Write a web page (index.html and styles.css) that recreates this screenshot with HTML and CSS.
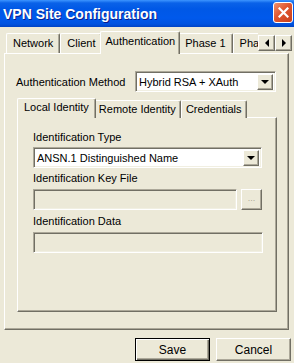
FILE: index.html
```html
<!DOCTYPE html>
<html lang="en">
<head>
  <meta charset="UTF-8">
  <title>VPN Site Configuration</title>
  <link rel="stylesheet" href="styles.css">
</head>
<body>
  <div class="window">
    <div class="titlebar">
      <span class="title">VPN Site Configuration</span>
      <button class="close-btn" title="Close">
        <svg width="11" height="11" viewBox="0 0 11 11">
          <path d="M1.5 1.5 L9.5 9.5 M9.5 1.5 L1.5 9.5" stroke="#fff" stroke-width="2.2" stroke-linecap="square"/>
        </svg>
      </button>
    </div>

    <div class="dialog-body">
      <div class="tab-strip">
        <div class="tabs">
          <div class="tab">Network</div>
          <div class="tab">Client</div>
          <div class="tab active">Authentication</div>
          <div class="tab">Phase 1</div>
          <div class="tab">Phase 2</div>
        </div>
        <div class="tab-scroll">
          <span class="scroll-btn"><i class="arrow-left"></i></span>
          <span class="scroll-btn"><i class="arrow-right"></i></span>
        </div>
      </div>

      <div class="tab-panel outer-panel">
        <div class="method-row">
          <label class="method-label">Authentication Method</label>
          <div class="select method-select">
            <span>Hybrid RSA + XAuth</span>
            <span class="drop-btn"><i class="arrow-down"></i></span>
          </div>
        </div>

        <div class="tab-strip inner-strip">
          <div class="tabs">
            <div class="tab active">Local Identity</div>
            <div class="tab">Remote Identity</div>
            <div class="tab">Credentials</div>
          </div>
        </div>

        <div class="tab-panel inner-panel">
          <label class="field-label first">Identification Type</label>
          <div class="select">
            <span>ANSN.1 Distinguished Name</span>
            <span class="drop-btn"><i class="arrow-down"></i></span>
          </div>

          <label class="field-label">Identification Key File</label>
          <div class="file-row">
            <div class="input disabled"></div>
            <span class="browse-btn">...</span>
          </div>

          <label class="field-label">Identification Data</label>
          <div class="input disabled"></div>
        </div>
      </div>

      <div class="actions">
        <button class="btn default">Save</button>
        <button class="btn">Cancel</button>
      </div>
    </div>
  </div>
</body>
</html>
```

FILE: styles.css
```css
:root {
  --face: #ece9d8;
  --light: #ffffff;
  --shadow: #aca899;
  --dark-shadow: #716f64;
  --text: #000000;
}

* {
  margin: 0;
  padding: 0;
  box-sizing: border-box;
}

body {
  width: 294px;
  height: 363px;
  overflow: hidden;
  background-color: var(--face);
  font-family: 'Liberation Sans', Arial, sans-serif;
  font-size: 11px;
  color: var(--text);
}

.window {
  height: 363px;
}

/* title bar */
.titlebar {
  height: 27px;
  display: flex;
  align-items: center;
  justify-content: space-between;
  padding: 0 1px 0 3px;
  background: linear-gradient(to bottom, #3d95ff 0, #0a62e8 3px, #0058e6 9px, #0059ec 18px, #0053e0 24px, #0043c4 27px);
}

.title {
  color: white;
  font-weight: bold;
  font-size: 14px;
  text-shadow: 1px 1px 0 #0a1e8c;
}

.close-btn {
  width: 20px;
  height: 21px;
  margin-top: -3px;
  border: 1px solid #fff;
  border-radius: 3px;
  background: linear-gradient(135deg, #f0916e 0, #e0562f 45%, #c8401c 100%);
  display: flex;
  align-items: center;
  justify-content: center;
}

/* dialog */
.dialog-body {
  padding: 4px 3px 0 4px;
}

.tab-strip {
  display: flex;
  height: 23px;
  position: relative;
  z-index: 1;
}

.tabs {
  flex: 1;
  display: flex;
  align-items: flex-start;
  overflow: hidden;
  padding-left: 2px;
}

.tab {
  height: 20px;
  margin-top: 2px;
  padding: 0 6px;
  line-height: 18px;
  white-space: nowrap;
  background-color: var(--face);
  border-top: 1px solid var(--light);
  border-left: 1px solid var(--light);
  border-right: 1px solid var(--dark-shadow);
  box-shadow: inset -1px 0 0 var(--shadow);
  border-radius: 2px 2px 0 0;
}

.tab.active {
  height: 23px;
  margin-top: 0;
  margin-left: -2px;
  margin-right: -2px;
  padding: 0 4px;
  line-height: 19px;
  position: relative;
  z-index: 2;
}

.tab-scroll {
  display: flex;
  margin-top: 4px;
  margin-right: -1px;
}

.scroll-btn {
  width: 17px;
  height: 16px;
  display: flex;
  align-items: center;
  justify-content: center;
  background-color: var(--face);
  border: 1px solid;
  border-color: var(--light) var(--dark-shadow) var(--dark-shadow) var(--light);
  box-shadow: inset -1px -1px 0 var(--shadow);
}

.arrow-left,
.arrow-right,
.arrow-down {
  width: 0;
  height: 0;
  border: solid transparent;
}

.arrow-left {
  border-width: 4px 4px 4px 0;
  border-right-color: #000;
}

.arrow-right {
  border-width: 4px 0 4px 4px;
  border-left-color: #000;
}

.arrow-down {
  border-width: 4px 4px 0 4px;
  border-top-color: #000;
}

.tab-panel {
  margin-top: -1px;
  border: 1px solid;
  border-color: var(--light) var(--dark-shadow) var(--dark-shadow) var(--light);
  box-shadow: inset -1px -1px 0 var(--shadow);
}

.outer-panel {
  height: 277px;
  margin-right: 2px;
  padding: 17px 12px 0 11px;
}

.method-row {
  display: flex;
  align-items: center;
  justify-content: space-between;
}

.select {
  height: 21px;
  display: flex;
  align-items: center;
  justify-content: space-between;
  padding: 0 2px 0 3px;
  background-color: white;
  border: 1px solid;
  border-color: var(--shadow) var(--light) var(--light) var(--shadow);
  box-shadow: inset 1px 1px 0 var(--dark-shadow), inset -1px -1px 0 #f1efe2;
  white-space: nowrap;
}

.method-select {
  width: 141px;
}

.drop-btn {
  width: 16px;
  height: 16px;
  display: flex;
  align-items: center;
  justify-content: center;
  background-color: var(--face);
  border: 1px solid;
  border-color: var(--light) var(--dark-shadow) var(--dark-shadow) var(--light);
  box-shadow: inset -1px -1px 0 var(--shadow);
}

.inner-strip {
  margin-top: 6px;
  margin-left: 1px;
  height: 20px;
}

.inner-strip .tabs {
  padding-left: 2px;
}

.inner-strip .tab {
  height: 18px;
  line-height: 17px;
  padding: 0 4px;
}

.inner-strip .tab.active {
  height: 20px;
  line-height: 17px;
  padding: 0 6px;
}

.inner-panel {
  width: 260px;
  height: 195px;
  margin-left: 1px;
  padding: 13px 14px 0 15px;
}

.field-label {
  display: block;
  line-height: 13px;
  margin-top: 4px;
  margin-bottom: 4px;
}

.field-label.first {
  margin-top: 0;
  margin-bottom: 3px;
}

.inner-panel .select {
  width: 229px;
}

.input {
  height: 21px;
  border: 1px solid;
  border-color: var(--shadow) var(--light) var(--light) var(--shadow);
  box-shadow: inset 1px 1px 0 var(--dark-shadow), inset -1px -1px 0 #f1efe2;
}

.input.disabled {
  background-color: var(--face);
}

.file-row {
  display: flex;
  gap: 4px;
  margin-bottom: 5px;
}

.file-row .input {
  flex: 1;
}

.browse-btn {
  width: 21px;
  height: 21px;
  text-align: center;
  line-height: 17px;
  color: var(--shadow);
  font-size: 9px;
  background-color: var(--face);
  border: 1px solid;
  border-color: var(--light) var(--dark-shadow) var(--dark-shadow) var(--light);
  box-shadow: inset -1px -1px 0 var(--shadow);
}

.inner-panel > .input {
  width: 230px;
}

/* buttons */
.actions {
  display: flex;
  justify-content: flex-end;
  gap: 6px;
  margin-top: 8px;
}

.btn {
  width: 75px;
  height: 23px;
  font-family: 'Liberation Sans', Arial, sans-serif;
  font-size: 12px;
  color: var(--text);
  background-color: var(--face);
  border: 1px solid;
  border-color: var(--light) var(--dark-shadow) var(--dark-shadow) var(--light);
  box-shadow: inset -1px -1px 0 var(--shadow);
}

.btn.default {
  border: 1px solid #000;
  box-shadow: inset 1px 1px 0 var(--light), inset -1px -1px 0 var(--dark-shadow), inset -2px -2px 0 var(--shadow);
}
```
